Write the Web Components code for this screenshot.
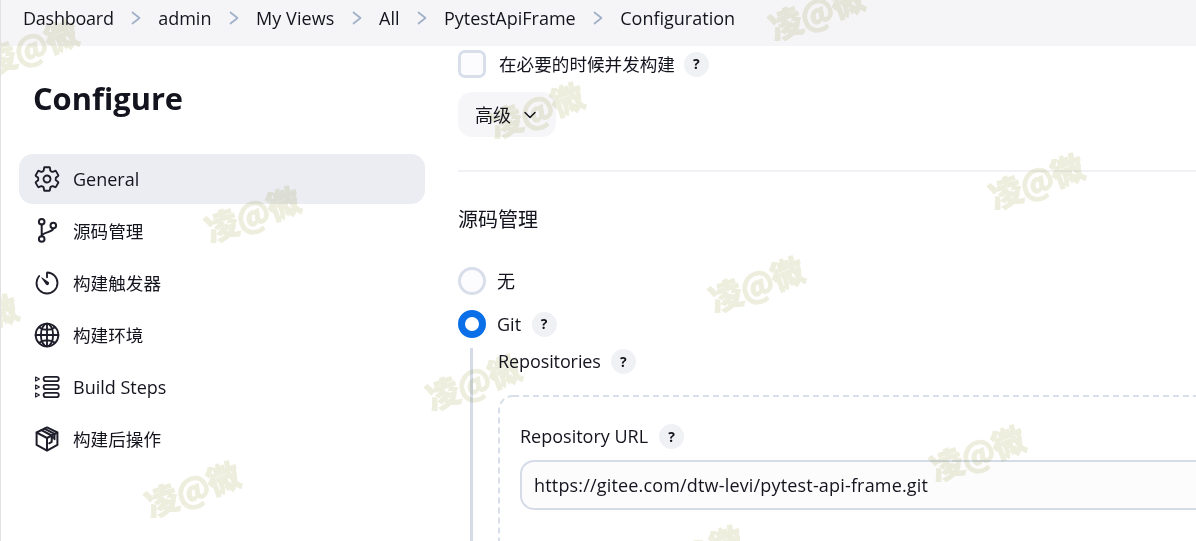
<!DOCTYPE html>
<html lang="zh"><head><meta charset="utf-8"><title>Configuration</title>
<style>
html,body{margin:0;height:541px;overflow:hidden;background:#fff}
body{font-family:"Open Sans","Noto Sans CJK SC",sans-serif;color:#14141f;font-size:18px}
</style></head><body>
<jk-page>
  <jk-breadcrumbs slot="top">
    <jk-crumb>Dashboard</jk-crumb><jk-crumb>admin</jk-crumb><jk-crumb class="wide">My Views</jk-crumb><jk-crumb>All</jk-crumb><jk-crumb>PytestApiFrame</jk-crumb><jk-crumb last>Configuration</jk-crumb>
  </jk-breadcrumbs>
  <jk-sidebar slot="side" heading="Configure">
    <jk-nav icon="gear" active>General</jk-nav>
    <jk-nav icon="branch" cjk>源码管理</jk-nav>
    <jk-nav icon="timer" cjk>构建触发器</jk-nav>
    <jk-nav icon="globe" cjk>构建环境</jk-nav>
    <jk-nav icon="steps">Build Steps</jk-nav>
    <jk-nav icon="box" cjk>构建后操作</jk-nav>
  </jk-sidebar>
  <jk-form slot="main">
    <jk-choice type="checkbox" help cjk>在必要的时候并发构建</jk-choice>
    <jk-advanced>高级</jk-advanced>
    <jk-section>源码管理</jk-section>
    <jk-choice type="radio" class="none">无</jk-choice>
    <jk-choice type="radio" checked help class="git">Git</jk-choice>
    <jk-nested>
      <jk-label help>Repositories</jk-label>
      <jk-repo url="https://gitee.com/dtw-levi/pytest-api-frame.git"></jk-repo>
    </jk-nested>
  </jk-form>
  <jk-mark slot="marks" x="30" y="47"></jk-mark>
  <jk-mark slot="marks" x="252" y="214"></jk-mark>
  <jk-mark slot="marks" x="536" y="110"></jk-mark>
  <jk-mark slot="marks" x="1036" y="181"></jk-mark>
  <jk-mark slot="marks" x="756" y="284"></jk-mark>
  <jk-mark slot="marks" x="-30" y="322"></jk-mark>
  <jk-mark slot="marks" x="473" y="382"></jk-mark>
  <jk-mark slot="marks" x="977" y="453"></jk-mark>
  <jk-mark slot="marks" x="192" y="489"></jk-mark>
  <jk-mark slot="marks" x="816" y="12"></jk-mark>
  <jk-mark slot="marks" x="695" y="553"></jk-mark>
</jk-page>
<script>
const ICONS={
gear:`<svg viewBox="0 0 512 512" fill="none" stroke="currentColor" stroke-width="34" stroke-linecap="round" stroke-linejoin="round"><path d="M262.29 192.31a64 64 0 1057.4 57.4 64.13 64.13 0 00-57.4-57.4zM416.39 256a154.34 154.34 0 01-1.53 20.79l45.21 35.46a10.81 10.81 0 012.45 13.75l-42.77 74a10.81 10.81 0 01-13.14 4.59l-44.9-18.08a16.11 16.11 0 00-15.17 1.75A164.48 164.48 0 01325 400.8a15.94 15.94 0 00-8.82 12.14l-6.73 47.89a11.08 11.08 0 01-10.68 9.17h-85.54a11.11 11.11 0 01-10.69-8.87l-6.72-47.82a16.07 16.07 0 00-9-12.22 155.3 155.3 0 01-21.46-12.57 16 16 0 00-15.11-1.71l-44.89 18.07a10.81 10.81 0 01-13.14-4.58l-42.77-74a10.8 10.8 0 012.45-13.75l38.21-30a16.05 16.05 0 006-14.08c-.36-4.17-.58-8.33-.58-12.5s.21-8.27.58-12.35a16 16 0 00-6.07-13.94l-38.19-30A10.81 10.81 0 0149.48 186l42.77-74a10.81 10.81 0 0113.14-4.59l44.9 18.08a16.11 16.11 0 0015.17-1.75A164.48 164.48 0 01187 111.2a15.94 15.94 0 008.82-12.14l6.73-47.89A11.08 11.08 0 01213.23 42h85.54a11.11 11.11 0 0110.69 8.87l6.72 47.82a16.07 16.07 0 009 12.22 155.3 155.3 0 0121.46 12.57 16 16 0 0015.11 1.71l44.89-18.07a10.81 10.81 0 0113.14 4.58l42.77 74a10.8 10.8 0 01-2.45 13.75l-38.21 30a16.05 16.05 0 00-6.05 14.08c.33 4.14.55 8.3.55 12.47z"/></svg>`,
branch:`<svg viewBox="0 0 28 28" fill="none" stroke="currentColor" stroke-width="2" stroke-linecap="round"><circle cx="8.7" cy="4.7" r="2.8"/><circle cx="8.7" cy="22" r="2.8"/><circle cx="20.3" cy="8.6" r="2.8"/><path d="M8.7 7.5v11.7M20.2 11.4c-.4 4.6-11.2 3.4-11.5 7.8"/></svg>`,
timer:`<svg viewBox="0 0 512 512" fill="none" stroke="currentColor" stroke-width="34" stroke-linecap="round" stroke-linejoin="round"><path d="M112.91 128A191.85 191.85 0 0064 254c-1.18 106.35 85.65 193.8 192 194 106.2.2 192-85.83 192-192 0-104.54-83.55-189.61-187.5-192a4.36 4.36 0 00-4.5 4.37V152"/><path fill="currentColor" stroke="none" d="M233.38 278.63l-79-113a8.13 8.13 0 0111.32-11.32l113 79a32.5 32.5 0 11-37 53.33 33.21 33.21 0 01-8.32-8.01z"/></svg>`,
globe:`<svg viewBox="0 0 512 512" fill="none" stroke="currentColor" stroke-width="34" stroke-linecap="round" stroke-linejoin="round"><path d="M256 48C141.13 48 48 141.13 48 256s93.13 208 208 208 208-93.13 208-208S370.87 48 256 48z"/><path d="M256 48c-58.07 0-112.67 92.43-112.67 208S197.93 464 256 464s112.67-92.43 112.67-208S314.07 48 256 48z"/><path d="M117.33 117.33c38.24 27.15 86.38 43.34 138.67 43.34s100.43-16.19 138.67-43.34M394.67 394.67c-38.24-27.15-86.38-43.34-138.67-43.34s-100.43 16.19-138.67 43.34M256 48v416M464 256H48"/></svg>`,
steps:`<svg viewBox="0 0 28 28" fill="none" stroke="currentColor" stroke-width="1.8" stroke-linejoin="round"><rect x="10.6" y="3.8" width="15.2" height="4.4" rx="2.2"/><rect x="10.6" y="11.8" width="15.2" height="4.4" rx="2.2"/><rect x="10.6" y="19.8" width="15.2" height="4.4" rx="2.2"/><path stroke-width="1.2" d="M2.6 4l3.8 2-3.8 2zM2.6 12l3.8 2-3.8 2zM2.6 20l3.8 2-3.8 2z"/></svg>`,
box:`<svg viewBox="0 0 28 28" fill="none" stroke="currentColor" stroke-width="2" stroke-linecap="round" stroke-linejoin="round"><path d="M14 2.4l10.4 5.1v12.4L14 25.6 3.6 19.9V7.5z"/><path d="M3.8 7.7L14 13l10.2-5.3M14 13v12.3"/><path d="M8.4 5.1l10.3 5.4v6.4l-2.5 1.4M11.3 3.7l10.2 5.2v5.4M18.7 13.2l2.8-1.5"/></svg>`
};
function def(name,css,html){
  customElements.define(name,class extends HTMLElement{
    constructor(){super();this.attachShadow({mode:'open'});}
    connectedCallback(){
      const h=typeof html==='function'?html(this):html;
      this.shadowRoot.innerHTML=`<style>${css}</style>`+h;
    }
  });
}
def('jk-page',`:host{display:grid;grid-template-columns:457px 1fr;grid-template-rows:46px 495px;width:1196px;height:541px;overflow:hidden;position:relative;box-sizing:border-box;border-left:1px solid #e2e2e2}
.top{grid-column:1/3;margin-left:-1px}.main{min-width:0;overflow:hidden}
.marks{position:absolute;inset:0 0 0 -1px;pointer-events:none;overflow:hidden;mix-blend-mode:multiply}`,
`<div class="top"><slot name="top"></slot></div><div><slot name="side"></slot></div><div class="main"><slot name="main"></slot></div><div class="marks"><slot name="marks"></slot></div>`);
def('jk-breadcrumbs',`:host{display:flex;align-items:center;height:46px;padding:0 0 10px 23px;box-sizing:border-box;background:#f5f5f8}`,`<slot></slot>`);
def('jk-crumb',`:host{display:inline-flex;align-items:center;white-space:nowrap;font-size:18px;line-height:26px}:host(:first-child){letter-spacing:-.25px}:host(.wide){letter-spacing:.1px}svg{width:12px;height:18px;margin:0 16.25px;display:block}`,
 e=>`<slot></slot>`+(e.hasAttribute('last')?'':`<svg viewBox="0 0 12 18" fill="none" stroke="#9fb0c8" stroke-width="1.7" stroke-linecap="round" stroke-linejoin="round"><path d="M2.5 3.5L9.5 9l-7 5.5"/></svg>`));
def('jk-sidebar',`:host{display:block;padding:0 33px 0 18px}h1{margin:0;padding:32px 0 0 14px;height:76px;font-size:30.8px;line-height:40px;font-weight:700;color:#14141f}
nav{display:flex;flex-direction:column;gap:2px}`,e=>`<h1>${e.getAttribute('heading')}</h1><nav><slot></slot></nav>`);
def('jk-nav',`:host{display:flex;align-items:center;gap:12px;height:50px;padding-left:14px;border-radius:14px;font-size:18px;color:#14141f}:host([cjk]){font-size:17.6px}:host([cjk]) .t{padding-bottom:2px}:host([active]){background:#ecedf3}
.i{width:28px;height:28px;flex:none;color:#1e1e2a}.i svg{display:block;width:100%;height:100%}`,e=>`<span class="i">${ICONS[e.getAttribute('icon')]}</span><span class="t"><slot></slot></span>`);
def('jk-help',`:host{display:inline-flex;align-items:center;justify-content:center;width:25px;height:25px;border-radius:50%;background:#eff1f5;font-size:14px;font-weight:700;color:#14141f;flex:none}`,`?`);
def('jk-form',`:host{display:block;padding-top:4px;width:820px}`,`<slot></slot>`);
def('jk-choice',`:host{display:flex;align-items:center;height:28px;font-size:18px;line-height:28px}:host([cjk]){font-size:17.6px}:host([cjk]) .t{padding-bottom:1px}
.box{width:28px;height:28px;box-sizing:border-box;border:3px solid #d8dfea;background:#fcfcfe;flex:none}
.cb{border-radius:7px;margin-right:13px}.ra{border-radius:50%;margin-right:11px}
.on{border:7.5px solid #0b6fe8;background:#fff}jk-help{margin-left:10.5px}:host([cjk]) jk-help{margin-left:9px}
:host(.git){margin-top:15px}`,
 e=>{const t=e.getAttribute('type')==='radio';return `<span class="box ${t?'ra':'cb'} ${e.hasAttribute('checked')?'on':''}"></span><span class="t"><slot></slot></span>`+(e.hasAttribute('help')?'<jk-help></jk-help>':'')});
def('jk-advanced',`:host{display:inline-flex;align-items:center;height:45px;width:98px;box-sizing:border-box;padding-left:17px;margin-top:14px;background:#f6f6f9;border-radius:14px;font-size:18px}.t{padding-bottom:2px}svg{width:18px;height:18px;margin-left:10px}`,
 `<span class="t"><slot></slot></span><svg viewBox="0 0 18 18" fill="none" stroke="#14141f" stroke-width="1.5" stroke-linecap="round" stroke-linejoin="round"><path d="M4 6.5l5 5 5-5"/></svg>`);
def('jk-section',`:host{display:block;margin-top:33px;border-top:2px solid #f2f2f6;padding:34px 0 0;height:61px;font-size:20px;line-height:28px}`,`<slot></slot>`);
def('jk-nested',`:host{display:block;margin:10px 0 0 12px;padding:0 0 0 25px;border-left:3px solid #d5dce8;height:200px}`,`<slot></slot>`);
def('jk-label',`:host{display:flex;align-items:center;height:26px;font-size:18px;letter-spacing:-.1px}jk-help{margin-left:10px;letter-spacing:0}`,`<span><slot></slot></span><jk-help></jk-help>`);
def('jk-repo',`:host{display:block;position:relative;margin-top:21px;padding:28px 0 0 22px;height:180px}
.dash{position:absolute;left:0;top:0;width:900px;height:400px;pointer-events:none}
.l{display:flex;align-items:center;height:26px;font-size:18px}jk-help{margin-left:11px}
.v{margin-top:11px;height:50px;box-sizing:border-box;border:2px solid #d5dce8;border-right:0;border-radius:14px 0 0 14px;background:#fcfcfd;padding-left:12px;line-height:46px;font-size:18px;letter-spacing:.17px;white-space:nowrap}`,
 e=>`<svg class="dash" viewBox="0 0 900 400"><rect x="1" y="1" width="1000" height="600" rx="14" fill="none" stroke="#d8dfea" stroke-width="2" stroke-dasharray="6 4"/></svg><div class="l"><span>Repository URL</span><jk-help></jk-help></div><div class="v">${e.getAttribute('url')}</div>`);
def('jk-mark',`:host{position:absolute;display:block;transform:translate(-50%,-50%) rotate(-20deg);font:900 33px/1 "Noto Sans CJK SC",sans-serif;color:#eeeede;-webkit-text-stroke:.8px #eeeede;white-space:nowrap;letter-spacing:-1px}`,`凌@微`);
document.querySelectorAll('jk-mark').forEach(m=>{m.style.left=m.getAttribute('x')+'px';m.style.top=m.getAttribute('y')+'px';});
</script>
</body></html>
